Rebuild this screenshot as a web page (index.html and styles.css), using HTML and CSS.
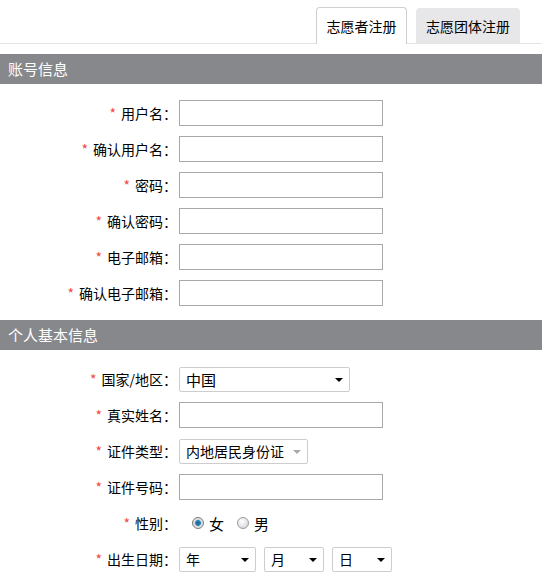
FILE: index.html
```html
<!DOCTYPE html>
<html lang="zh-CN">

<head>
    <meta charset="UTF-8" />
    <meta name="viewport" content="width=device-width, initial-scale=1.0" />
    <title>志愿者注册</title>
    <link rel="stylesheet" href="styles.css">
</head>

<body>
    <div class="tabs">
        <a class="tab active" href="#">志愿者注册</a>
        <a class="tab" href="#">志愿团体注册</a>
    </div>

    <div class="section-title">账号信息</div>
    <div class="form-section">
        <div class="row">
            <label class="label"><span class="req">*</span>用户名：</label>
            <input class="text" type="text">
        </div>
        <div class="row">
            <label class="label"><span class="req">*</span>确认用户名：</label>
            <input class="text" type="text">
        </div>
        <div class="row">
            <label class="label"><span class="req">*</span>密码：</label>
            <input class="text" type="password">
        </div>
        <div class="row">
            <label class="label"><span class="req">*</span>确认密码：</label>
            <input class="text" type="password">
        </div>
        <div class="row">
            <label class="label"><span class="req">*</span>电子邮箱：</label>
            <input class="text" type="text">
        </div>
        <div class="row">
            <label class="label"><span class="req">*</span>确认电子邮箱：</label>
            <input class="text" type="text">
        </div>
    </div>

    <div class="section-title">个人基本信息</div>
    <div class="form-section">
        <div class="row">
            <label class="label"><span class="req">*</span>国家/地区：</label>
            <div class="select country">中国<span class="arrow"></span></div>
        </div>
        <div class="row">
            <label class="label"><span class="req">*</span>真实姓名：</label>
            <input class="text" type="text">
        </div>
        <div class="row">
            <label class="label"><span class="req">*</span>证件类型：</label>
            <div class="select idtype">内地居民身份证<span class="arrow light"></span></div>
        </div>
        <div class="row">
            <label class="label"><span class="req">*</span>证件号码：</label>
            <input class="text" type="text">
        </div>
        <div class="row">
            <label class="label"><span class="req">*</span>性别：</label>
            <div class="radios">
                <span class="radio checked"></span><span class="radio-text">女</span>
                <span class="radio"></span><span class="radio-text">男</span>
            </div>
        </div>
        <div class="row">
            <label class="label"><span class="req">*</span>出生日期：</label>
            <div class="dates">
                <div class="select year">年<span class="arrow"></span></div>
                <div class="select month">月<span class="arrow"></span></div>
                <div class="select day">日<span class="arrow"></span></div>
            </div>
        </div>
    </div>
</body>

</html>
```

FILE: styles.css
```css
* {
    padding: 0;
    margin: 0;
    box-sizing: border-box;
}

body {
    font-family: "Noto Sans CJK SC", "Liberation Sans", sans-serif;
    font-size: 14px;
    color: #000;
    background-color: #fff;
    width: 542px;
}

.tabs {
    display: flex;
    justify-content: flex-end;
    align-items: flex-end;
    gap: 9px;
    height: 44px;
    padding-right: 22px;
    border-bottom: 1px solid #e4e4e4;
}

.tab {
    display: flex;
    align-items: center;
    justify-content: center;
    text-decoration: none;
    color: #000;
    font-size: 14px;
    border-radius: 4px 4px 0 0;
}

.tab.active {
    width: 91px;
    height: 37px;
    margin-bottom: -1px;
    background-color: #fff;
    border: 1px solid #cfcfcf;
    border-bottom: none;
}

.tab:not(.active) {
    width: 104px;
    height: 35px;
    background-color: #e7e6e8;
}

.section-title {
    margin-top: 10px;
    height: 30px;
    line-height: 30px;
    padding-left: 8px;
    background-color: #87888c;
    color: #fff;
    font-size: 15px;
}

.form-section {
    display: flex;
    flex-direction: column;
    gap: 10px;
    padding: 16px 0 14px;
}

.form-section + .section-title {
    margin-top: 0;
}

.row {
    display: flex;
    align-items: center;
    height: 26px;
}

.label {
    width: 179px;
    padding-right: 2px;
    text-align: right;
    white-space: nowrap;
}

.req {
    color: #f0484a;
    margin-right: 5px;
}

.text {
    width: 204px;
    height: 26px;
    border: 1px solid #a8a8a8;
    outline: none;
    background: #fff;
}

.select {
    position: relative;
    height: 25px;
    line-height: 23px;
    padding-left: 6px;
    border: 1px solid #cdcdcd;
    border-radius: 2px;
    background: #fff;
}

.country {
    width: 171px;
    font-size: 15px;
}

.arrow {
    position: absolute;
    right: 6px;
    top: 10px;
    width: 0;
    height: 0;
    border-left: 4px solid transparent;
    border-right: 4px solid transparent;
    border-top: 4px solid #000;
}

.arrow.light {
    border-top-color: #aaa;
}

.idtype {
    width: 129px;
}

.radios {
    display: flex;
    align-items: center;
    padding-left: 13px;
    font-size: 15px;
}

.radio {
    width: 12px;
    height: 12px;
    border-radius: 50%;
    border: 1px solid #9a9a9a;
    background: radial-gradient(circle at 40% 35%, #fff 0%, #e2e2e2 60%, #c8c8c8 100%);
}

.radio.checked {
    background: radial-gradient(circle, #1a5c8a 0%, #2c8ac2 38%, #d8d8d8 45%, #eee 100%);
    border-color: #7a7a7a;
}

.radio-text {
    margin-left: 5px;
    margin-right: 13px;
}

.dates {
    display: flex;
    gap: 8px;
}

.year {
    width: 77px;
}

.month {
    width: 60px;
}

.day {
    width: 60px;
}
```
